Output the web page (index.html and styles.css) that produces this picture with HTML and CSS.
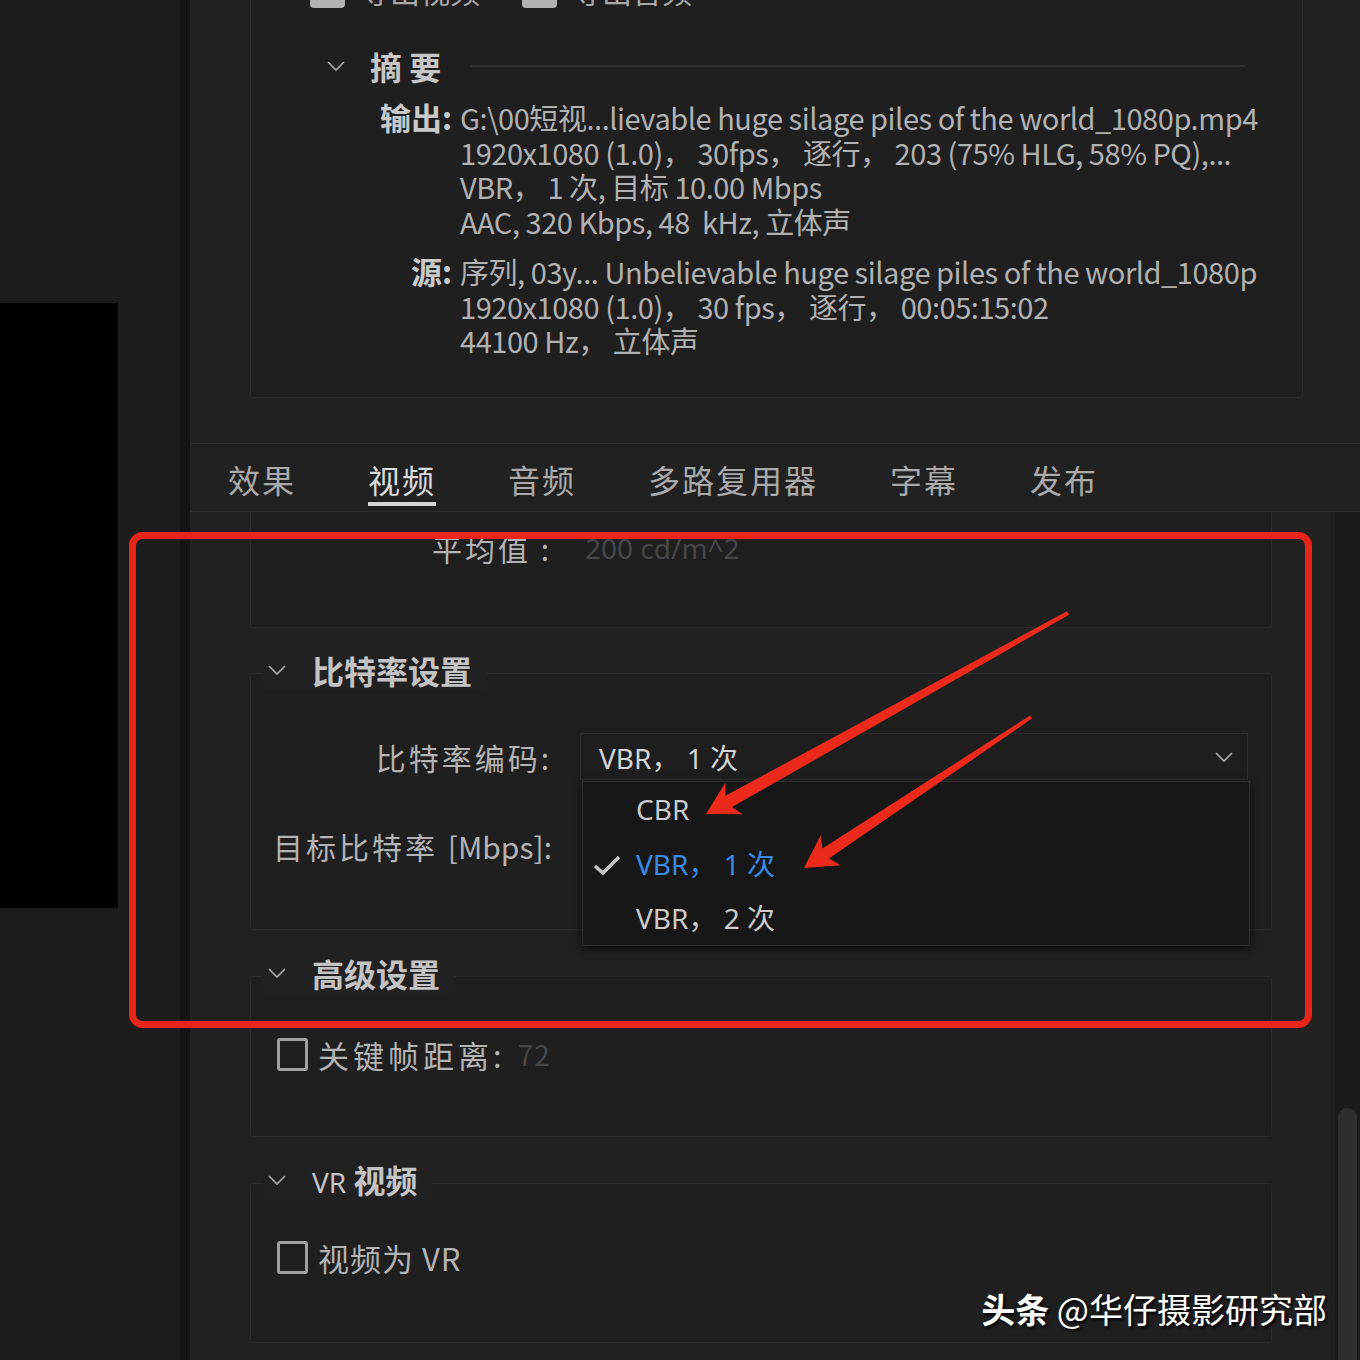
FILE: index.html
```html
<!DOCTYPE html>
<html lang="zh-CN">
<head>
    <meta charset="UTF-8">
    <meta name="viewport" content="width=device-width, initial-scale=1.0">
    <title>导出设置 | 视频</title>
    <link rel="stylesheet" href="styles.css">
</head>
<body>
    <div class="app">
        <aside class="side">
            <div class="preview"></div>
        </aside>
        <div class="divider"></div>
        <main class="panel">
            <div class="top">
                <section class="summary">
                    <div class="exports">
                        <span class="tick"></span><span class="exp-label">导出视频</span>
                        <span class="tick second"></span><span class="exp-label">导出音频</span>
                    </div>
                    <div class="sum-head">
                        <svg class="chev" width="18" height="10" viewBox="0 0 18 10"><polyline points="1,1 9,9 17,1"/></svg>
                        <h2>摘 要</h2>
                        <span class="rule"></span>
                    </div>
                    <dl class="info">
                        <dt>输出:</dt>
                        <dd>
                            G:\00短视...lievable huge silage piles of the world_1080p.mp4<br>
                            1920x1080 (1.0)，&nbsp;30fps，&nbsp;逐行，&nbsp;203 (75% HLG, 58% PQ),...<br>
                            VBR，&nbsp;1 次, 目标 10.00 Mbps<br>
                            AAC, 320 Kbps, 48&nbsp; kHz, 立体声
                        </dd>
                        <dt>源:</dt>
                        <dd>
                            序列, 03y... Unbelievable huge silage piles of the world_1080p<br>
                            1920x1080 (1.0)，&nbsp;30 fps，&nbsp;逐行，&nbsp;00:05:15:02<br>
                            44100 Hz，&nbsp;立体声
                        </dd>
                    </dl>
                </section>
            </div>

            <nav class="tabs">
                <a class="tab">效果</a>
                <a class="tab active">视频</a>
                <a class="tab">音频</a>
                <a class="tab">多路复用器</a>
                <a class="tab">字幕</a>
                <a class="tab">发布</a>
            </nav>

            <div class="scroller">
                <div class="scroll-content">
                    <div class="box box-hdr">
                        <div class="field">
                            <span class="label">平均值 :</span>
                            <span class="dim">200 cd/m^2</span>
                        </div>
                    </div>

                    <section class="group">
                        <div class="group-head">
                            <span class="head-mask">
                                <svg class="chev" width="18" height="10" viewBox="0 0 18 10"><polyline points="1,1 9,9 17,1"/></svg>
                                <h3>比特率设置</h3>
                            </span>
                        </div>
                        <div class="box box-bitrate">
                            <div class="field">
                                <span class="label">比特率编码:</span>
                                <div class="select">
                                    <span>VBR，&nbsp;1 次</span>
                                    <svg class="chev" width="18" height="10" viewBox="0 0 18 10"><polyline points="1,1 9,9 17,1"/></svg>
                                    <ul class="menu">
                                        <li>CBR</li>
                                        <li class="picked">
                                            <svg class="check" width="28" height="22" viewBox="0 0 28 22"><polyline points="2,12 10,19 26,3"/></svg>
                                            VBR，&nbsp;1 次
                                        </li>
                                        <li>VBR，&nbsp;2 次</li>
                                    </ul>
                                </div>
                            </div>
                            <div class="field second-row">
                                <span class="label">目标比特率 <span class="unit">[Mbps]:</span></span>
                                <span></span>
                            </div>
                        </div>
                    </section>

                    <section class="group">
                        <div class="group-head">
                            <span class="head-mask">
                                <svg class="chev" width="18" height="10" viewBox="0 0 18 10"><polyline points="1,1 9,9 17,1"/></svg>
                                <h3>高级设置</h3>
                            </span>
                        </div>
                        <div class="box box-adv">
                            <label class="check-row">
                                <span class="cbox"></span>
                                <span class="spaced">关键帧距离:</span>
                                <span class="dim">72</span>
                            </label>
                        </div>
                    </section>

                    <section class="group">
                        <div class="group-head">
                            <span class="head-mask">
                                <svg class="chev" width="18" height="10" viewBox="0 0 18 10"><polyline points="1,1 9,9 17,1"/></svg>
                                <h3><span class="latin">VR</span> 视频</h3>
                            </span>
                        </div>
                        <div class="box box-vr">
                            <label class="check-row">
                                <span class="cbox"></span>
                                <span>视频为 VR</span>
                            </label>
                        </div>
                    </section>
                </div>
                <div class="scrollbar"><div class="thumb"></div></div>
            </div>
        </main>
    </div>

    <!-- annotation overlay -->
    <svg class="annot" width="1360" height="1360" viewBox="0 0 1360 1360">
        <rect x="132.5" y="535.5" width="1176" height="489" rx="10" fill="none" stroke="#e8251a" stroke-width="7"/>
        <polygon points="706,814 725.3,782.8 725.5,795.7 1067,611.2 1069,614.8 731.9,807.1 742.7,814.2" fill="#ec2a1c"/>
        <polygon points="804,868 820.7,835.3 822.4,848.6 1030,715.5 1032,718.5 829,858.6 840.7,865.3" fill="#ec2a1c"/>
    </svg>

    <div class="watermark"><b>头条</b> @华仔摄影研究部</div>
</body>
</html>
```

FILE: styles.css
```css
/* Global */
body {
    margin: 0;
    width: 1360px;
    height: 1360px;
    overflow: hidden;
    position: relative;
    background-color: #212122;
    color: #b4b4b4;
    font-family: "Noto Sans", "Noto Sans CJK SC", sans-serif;
}
.app {
    display: flex;
    height: 1360px;
}

/* left side */
.side {
    width: 180px;
    background-color: #1c1c1d;
}
.preview {
    margin-top: 303px;
    width: 118px;
    height: 605px;
    background-color: #000;
}
.divider {
    width: 10px;
    background-color: #141414;
}
.panel {
    flex: 1;
    display: flex;
    flex-direction: column;
    background-color: #212122;
}

/* chevrons */
.chev {
    flex: none;
}
.chev polyline {
    fill: none;
    stroke: #a9a9a9;
    stroke-width: 1.7;
}

/* summary */
.top {
    height: 443px;
    overflow: hidden;
}
.summary {
    box-sizing: border-box;
    margin: -30px 0 0 60px;
    width: 1053px;
    height: 428px;
    border: 1px solid #2b2b2c;
    border-radius: 3px;
    background-color: #1f1f20;
}
.exports {
    display: flex;
    align-items: flex-end;
    height: 37px;
    padding-left: 59px;
}
.tick {
    width: 35px;
    height: 35px;
    border-radius: 4px;
    background-color: #b2b2b2;
}
.tick.second {
    margin-left: 42px;
}
.exp-label {
    margin-left: 15px;
    font-size: 30px;
    line-height: 35px;
    color: #a8a8a8;
    font-family: "Noto Sans CJK SC", sans-serif;
}
.sum-head {
    display: flex;
    align-items: center;
    height: 40px;
    margin-top: 38px;
    padding-left: 76px;
}
.sum-head h2 {
    margin: 0 0 0 25px;
    font-size: 32px;
    font-weight: bold;
    color: #c6c6c6;
    font-family: "Noto Sans CJK SC", sans-serif;
}
.rule {
    flex: 1;
    height: 2px;
    margin: 0 57px 0 30px;
    background-color: #323233;
}
.info {
    display: grid;
    grid-template-columns: 201px 1fr;
    column-gap: 8px;
    row-gap: 16px;
    margin: 14px 0 0;
    font-size: 29px;
    line-height: 34.5px;
    font-family: "Noto Sans CJK SC", sans-serif;
}
.info dt {
    text-align: right;
    font-size: 31px;
    font-weight: bold;
    color: #c9c9c9;
}
.info dd {
    margin: 0;
    white-space: nowrap;
    letter-spacing: -0.45px;
    color: #b1b1b1;
}

/* tabs */
.tabs {
    display: flex;
    align-items: flex-start;
    gap: 72px;
    box-sizing: border-box;
    height: 69px;
    padding-left: 38px;
    border-top: 1px solid #2c2c2d;
    border-bottom: 1px solid #2c2c2d;
    background-color: #212121;
}
.tab {
    padding-top: 12px;
    line-height: 46px;
    border-bottom: 4px solid transparent;
    font-size: 32px;
    letter-spacing: 2px;
    color: #a9a9a9;
    font-family: "Noto Sans CJK SC", sans-serif;
}
.tab.active {
    color: #dadada;
    border-bottom-color: #d4d4d4;
}

/* scroll area */
.scroller {
    flex: 1;
    display: flex;
    overflow: hidden;
}
.scroll-content {
    flex: 1;
    background-color: #212122;
}
.scrollbar {
    width: 25px;
    background-color: #1b1b1c;
}
.thumb {
    margin: 596px 0 0 3px;
    width: 19px;
    height: 300px;
    border-radius: 9px;
    background-color: #2e2e2f;
}

.box {
    box-sizing: border-box;
    margin-left: 60px;
    width: 1022px;
    border: 1px solid #2a2a2b;
    border-radius: 3px;
    background-color: #1f1f20;
}
.box-hdr {
    margin-top: -40px;
    height: 156px;
    padding-top: 51px;
}
.box-bitrate {
    height: 257px;
    padding-top: 59px;
}
.box-adv {
    height: 161px;
    padding-top: 60px;
}
.box-vr {
    height: 160px;
    padding-top: 56px;
}

.group {
    margin-top: 22px;
}
.group + .group {
    margin-top: 23px;
}
.group-head {
    position: relative;
    z-index: 1;
    height: 40px;
    margin: 0 0 -17px 72px;
}
.head-mask {
    display: inline-flex;
    align-items: center;
    gap: 26px;
    height: 40px;
    padding: 0 14px 0 6px;
    background-color: #212122;
}
.head-mask h3 {
    margin: 0;
    font-size: 32px;
    line-height: 40px;
    font-weight: bold;
    color: #c3c3c3;
    font-family: "Noto Sans CJK SC", sans-serif;
}
.head-mask .latin {
    font-family: "Noto Sans", sans-serif;
    font-weight: normal;
    font-size: 28px;
}

/* form fields */
.field {
    display: grid;
    grid-template-columns: 301px 668px;
    column-gap: 28px;
    align-items: center;
    height: 47px;
}
.second-row {
    margin-top: 42px;
}
.label {
    text-align: right;
    font-size: 30px;
    letter-spacing: 3px;
    color: #b3b3b3;
    white-space: nowrap;
    font-family: "Noto Sans CJK SC", sans-serif;
}
.label .unit {
    letter-spacing: 0;
}
.dim {
    padding-left: 5px;
    font-size: 28px;
    color: #464647;
}
.select {
    position: relative;
    box-sizing: border-box;
    height: 47px;
    display: flex;
    align-items: center;
    justify-content: space-between;
    padding: 0 14px 0 18px;
    border: 1px solid #2c2c2d;
    background-color: #1e1e1f;
    font-size: 28px;
    color: #d4d4d4;
}
.menu {
    position: absolute;
    top: 47px;
    left: 1px;
    z-index: 2;
    box-sizing: border-box;
    width: 668px;
    height: 165px;
    margin: 0;
    padding: 0;
    list-style: none;
    border: 1px solid #2f2f30;
    background-color: #171718;
    box-shadow: 0 4px 8px rgba(0, 0, 0, 0.6);
}
.menu li {
    position: relative;
    height: 54.5px;
    line-height: 54px;
    padding-left: 53px;
    color: #cacaca;
}
.menu li.picked {
    color: #3a89e4;
}
.check {
    position: absolute;
    left: 10px;
    top: 17px;
}
.check polyline {
    fill: none;
    stroke: #c4c4c4;
    stroke-width: 3.5;
}

/* checkboxes */
.check-row {
    display: flex;
    align-items: center;
    height: 34px;
    padding-left: 26px;
    font-size: 31px;
    letter-spacing: 1px;
    color: #b3b3b3;
    font-family: "Noto Sans CJK SC", sans-serif;
}
.check-row .spaced {
    letter-spacing: 4px;
}
.cbox {
    box-sizing: border-box;
    width: 31px;
    height: 33px;
    margin-right: 10px;
    border: 3px solid #a0a0a0;
    border-radius: 3px;
}
.check-row .dim {
    padding-left: 12px;
}

/* annotation + watermark */
.annot {
    position: absolute;
    top: 0;
    left: 0;
    z-index: 10;
    pointer-events: none;
}
.watermark {
    position: absolute;
    top: 1288px;
    right: 33px;
    z-index: 11;
    font-size: 34px;
    line-height: 42px;
    color: #fff;
    text-shadow: 2px 2px 3px rgba(0, 0, 0, 0.9);
    font-family: "Noto Sans CJK SC", sans-serif;
}
```
